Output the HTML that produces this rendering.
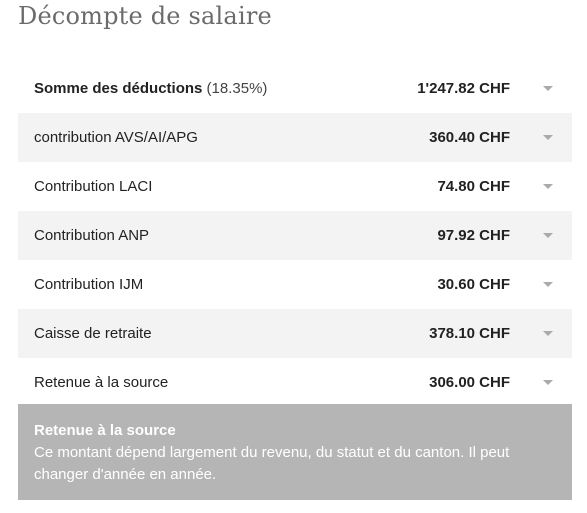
<!DOCTYPE html>
<html><head><meta charset="utf-8"><style>
body{margin:0;width:587px;height:513px;background:#fff;font-family:"Liberation Sans",sans-serif;overflow:hidden}
h1{position:absolute;left:18px;top:2px;margin:0;font:400 24px "DejaVu Serif",serif;color:#6b6b6b;letter-spacing:0.2px}
.row{position:absolute;left:18px;width:554px;height:49px;font-size:15px;color:#222}
.row.g{background:#f3f3f3}
.l{position:absolute;left:16px;top:16px}
.r{position:absolute;right:62px;top:16px;font-weight:bold}
.a{position:absolute;right:19px;top:22px;width:0;height:0;border-left:5px solid transparent;border-right:5px solid transparent;border-top:5px solid #aaa}
.box{position:absolute;left:18px;top:404px;width:554px;height:96px;background:#b5b5b5;color:#fff;font-size:15px}
.box div{position:absolute;left:16px;top:16px;right:30px;line-height:22px}
</style></head><body>
<h1>Décompte de salaire</h1>
<div class="row" style="top:64px"><span class="l"><b>Somme des déductions</b> <span style="color:#444">(18.35%)</span></span><span class="r">1'247.82 CHF</span><span class="a"></span></div>
<div class="row g" style="top:113px"><span class="l">contribution AVS/AI/APG</span><span class="r">360.40 CHF</span><span class="a"></span></div>
<div class="row" style="top:162px"><span class="l">Contribution LACI</span><span class="r">74.80 CHF</span><span class="a"></span></div>
<div class="row g" style="top:211px"><span class="l">Contribution ANP</span><span class="r">97.92 CHF</span><span class="a"></span></div>
<div class="row" style="top:260px"><span class="l">Contribution IJM</span><span class="r">30.60 CHF</span><span class="a"></span></div>
<div class="row g" style="top:309px"><span class="l">Caisse de retraite</span><span class="r">378.10 CHF</span><span class="a"></span></div>
<div class="row" style="top:358px"><span class="l">Retenue à la source</span><span class="r">306.00 CHF</span><span class="a"></span></div>
<div class="box"><div style="top:16px"><b>Retenue à la source</b><br>Ce montant dépend largement du revenu, du statut et du canton. Il peut changer d'année en année.</div></div>
</body></html>
